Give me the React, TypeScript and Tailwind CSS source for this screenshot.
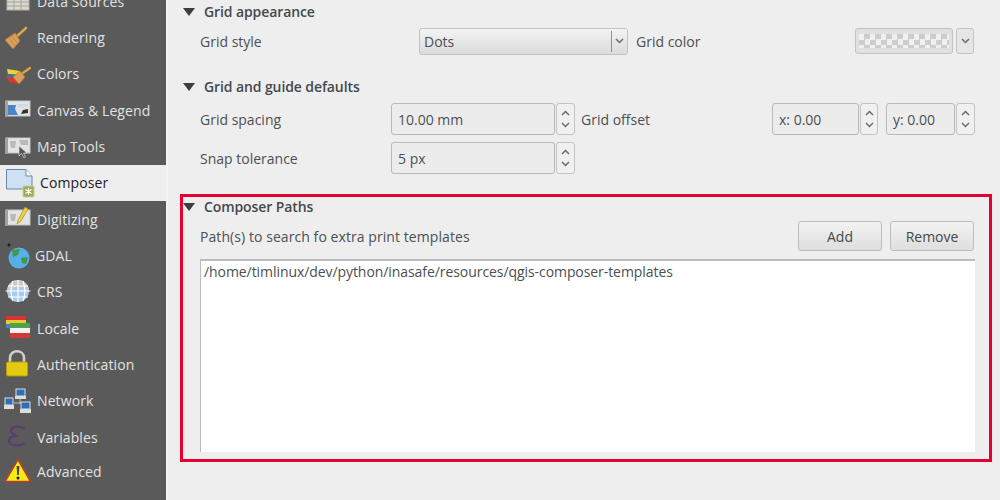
import * as React from 'react';

const MapBase = ({ children }: { children?: React.ReactNode }) => (
  <>
    <rect x="5" y="6" width="24" height="15" fill="#e4e4e4" stroke="#c8c8c8" />
    <path d="M4 6 L7 5 V21 L4 22 Z" fill="#a2a2a2" />
    {children}
  </>
);

const icons: Record<string, React.ReactNode> = {
  'Data Sources': (
    <>
      <rect x="6" y="6" width="22" height="18" fill="#dad7cd" stroke="#b5b1a8" />
      <path d="M6 12 H28 M6 16 H28 M6 20 H28 M13 6 V24 M20 6 V24" stroke="#a9a59b" />
    </>
  ),
  Rendering: (
    <>
      <path d="M14 15 L25 5" stroke="#d9a441" strokeWidth="2.6" strokeLinecap="round" />
      <path d="M4 17 L14 10 L19 18 L12 26 Z" fill="#d9a05a" stroke="#b47a34" strokeWidth="0.8" />
      <path d="M8 15 L14 23 M11 13 L16 20" stroke="#bd8540" strokeWidth="0.8" />
    </>
  ),
  Colors: (
    <>
      <path d="M6 10 L19 12 L20 16 L7 15 Z" fill="#e8d33a" />
      <path d="M6 15 L16 16 L15 19 L6 18 Z" fill="#3f6ea8" />
      <path d="M5 18 L14 19 L19 25 L8 23 Z" fill="#d8382e" />
      <path d="M19 16 L29 9" stroke="#d9a441" strokeWidth="2.4" strokeLinecap="round" />
      <path d="M12 18 L19 12 L24 18 L18 25 Z" fill="#d9a05a" stroke="#b47a34" strokeWidth="0.8" />
    </>
  ),
  'Canvas & Legend': (
    <MapBase>
      <path d="M7 10 H15 L14 14 L17 20 H7 Z" fill="#4a86c5" />
      <path d="M16 9 H27 V11 L22 13 L17 12 Z" fill="#cfdcea" />
      <path d="M20 19 L22 15 L27 14 V18 Z" fill="#333" />
    </MapBase>
  ),
  'Map Tools': (
    <MapBase>
      <path d="M9 9 H15 L14 16 H10 Z M18 8 H27 V13 H20 Z" fill="#b9b9b9" />
      <path d="M18 14 V24 L20.5 21.5 L23 26 L24.5 25 L22.5 21 L26 21 Z" fill="#555" stroke="#d8d8d8" strokeWidth="0.7" />
    </MapBase>
  ),
  Composer: (
    <>
      <path d="M5.5 1.5 H25 L31 8 V21 H5.5 Z" fill="#cfe0f5" stroke="#6a87a8" />
      <path d="M25 1.5 V8 H31" fill="#fff" stroke="#6a87a8" />
      <rect x="22" y="18" width="11" height="11" rx="1" fill="#a3ab54" stroke="#c9cd93" />
      <path d="M27.5 20 V27 M24.5 21.5 L30.5 25.5 M30.5 21.5 L24.5 25.5" stroke="#fff" strokeWidth="1.2" />
    </>
  ),
  Digitizing: (
    <MapBase>
      <path d="M9 10 H15 L14 17 H10 Z" fill="#b9b9b9" />
      <path d="M17 16 L24 3 L27 5 L20 17 L16 20 Z" fill="#ecd13a" stroke="#a88f1c" strokeWidth="0.7" />
    </MapBase>
  ),
  GDAL: (
    <>
      <circle cx="8" cy="4" r="1.5" fill="#2a1c1c" />
      <circle cx="18" cy="17" r="10.5" fill="#58aee6" />
      <path d="M11 9 L19 8 L17 14 L12 16 Z M20 17 L27 16 L25 23 L21 22 Z" fill="#3e9a48" />
    </>
  ),
  CRS: (
    <>
      <circle cx="17" cy="14" r="11" fill="#a9cbef" />
      <path d="M6 14 A11 11 0 0 1 28 14 L17 10 Z" fill="#c9c9c9" />
      <path d="M7 9 H27 M4.5 14 H29.5 M7 20 H27 M17 3 V25 M12 4 Q8 14 12 24 M22 4 Q26 14 22 24" stroke="#fff" strokeWidth="1.2" fill="none" />
    </>
  ),
  Locale: (
    <>
      <path d="M5 3 H25 V7 H5 Z" fill="#d9352c" />
      <path d="M5 7 H25 V11 H5 Z" fill="#ecc92e" />
      <path d="M5 11 H12 V15 H5 Z" fill="#4a7fc1" />
      <path d="M9 10 H29 V15 H9 Z" fill="#4ea24c" />
      <path d="M9 15 H29 V20 H9 Z" fill="#f2f2f2" />
      <path d="M9 20 H29 V25 H9 Z" fill="#d23b33" />
    </>
  ),
  Authentication: (
    <>
      <path d="M9 13 V8 C9 -1 23 -1 23 8 V13" fill="none" stroke="#cfcfcf" strokeWidth="2.6" />
      <rect x="5.5" y="12" width="21" height="14" rx="1.5" fill="#e6c911" stroke="#b39c0c" />
    </>
  ),
  Network: (
    <>
      <path d="M19 12 V18 M13 17 H20" stroke="#bbb" />
      <rect x="15" y="3" width="9" height="7" fill="#2f6fb5" stroke="#ddd" />
      <rect x="14" y="10" width="11" height="3" fill="#dcdcdc" />
      <rect x="4" y="12" width="8" height="7" fill="#2f6fb5" stroke="#ddd" />
      <rect x="3" y="19" width="10" height="4" fill="#dcdcdc" />
      <rect x="20" y="16" width="9" height="7" fill="#2f6fb5" stroke="#ddd" />
      <rect x="19" y="23" width="11" height="4" fill="#dcdcdc" />
    </>
  ),
  Variables: (
    <path d="M24 7 C19 3 10 4 10 9 C10 12 13 13 17 14 C12 14 8 15 8 19 C8 24 19 25 24 21" fill="none" stroke="#5b3b77" strokeWidth="2.2" />
  ),
  Advanced: (
    <>
      <path d="M17 2.5 L29.5 24.5 H4 Z" fill="#f5ea1b" stroke="#b8402a" strokeWidth="1.6" strokeLinejoin="round" />
      <path d="M15.6 9 H18.4 L17.8 18 H16.2 Z" fill="#444" />
      <circle cx="17" cy="21" r="1.5" fill="#222" />
    </>
  ),
};

const items = [
  'Data Sources', 'Rendering', 'Colors', 'Canvas & Legend', 'Map Tools', 'Composer', 'Digitizing',
  'GDAL', 'CRS', 'Locale', 'Authentication', 'Network', 'Variables', 'Advanced',
];

const SideItem = ({ label }: { label: string }) => {
  const active = label === 'Composer';
  return (
    <div
      className={`flex items-center h-[36.35px] shrink-0 pl-[1px] tracking-[0.1px] ${label === 'Advanced' ? '-mt-[2px]' : ''} ${active ? 'bg-[#eeeeee] text-[#1c1c1c]' : 'text-[#e2e2e2]'}`}
    >
      <svg width="36" height="30" viewBox="0 0 36 30" className="shrink-0 overflow-visible">
        {icons[label]}
      </svg>
      <span className={active ? 'ml-[3px]' : label === 'GDAL' ? '-ml-[2px]' : ''}>{label}</span>
    </div>
  );
};

const Heading = ({ children }: { children: React.ReactNode }) => (
  <div className="flex items-center h-[19px] font-semibold text-[#45494a] tracking-[-0.1px]">
    <svg width="12" height="8" viewBox="0 0 12 8" className="mr-[9px]">
      <path d="M0 0 H12 L6 8 Z" fill="#3c3f40" />
    </svg>
    {children}
  </div>
);

const Chevron = ({ up }: { up?: boolean }) => (
  <svg width="9" height="6" viewBox="0 0 9 6">
    <path d={up ? 'M1 5 L4.5 1.5 L8 5' : 'M1 1 L4.5 4.5 L8 1'} fill="none" stroke="#6b6b6b" strokeWidth="1.5" />
  </svg>
);

const Spin = ({ value, width, btn }: { value: string; width: string; btn: string }) => (
  <div className="flex h-[32px] shrink-0">
    <div className={`${width} flex items-center pl-[6px] bg-[#ececec] border border-[#b9b9b9] rounded-[3px]`}>{value}</div>
    <div className={`${btn} flex flex-col items-center justify-around py-[3px] bg-[#f0f0f0] border border-[#c4c4c4] rounded-[3px] ml-[1px]`}>
      <Chevron up />
      <Chevron />
    </div>
  </div>
);

const PushButton = ({ children }: { children: React.ReactNode }) => (
  <button className="w-[84px] h-[30px] rounded-[3px] border border-[#bdbdbd] bg-gradient-to-b from-[#f2f2f2] to-[#dedede] text-[#45494a]">
    {children}
  </button>
);

export default function App() {
  return (
    <div className="flex w-[1000px] h-[500px] overflow-hidden bg-[#eeeeee] text-[14px] text-[#4c5051] font-['Open_Sans',sans-serif]">
      <aside className="w-[166px] shrink-0 bg-[#5a5a5a] flex flex-col -mt-[17px] h-[517px]">
        {items.map((i) => (
          <SideItem key={i} label={i} />
        ))}
      </aside>

      <main className="flex-1 pl-[15px] pt-[2px] border-l-2 border-[#f3f3f3]">
        <Heading>Grid appearance</Heading>
        <div className="flex items-center ml-[17px] mt-[6px] h-[28px]">
          <span className="w-[219px]">Grid style</span>
          <div className="flex w-[209px] h-[27px] items-center border border-[#c2c2c2] rounded-[3px] bg-gradient-to-b from-[#f3f3f3] to-[#dcdcdc] pl-[4px]">
            <span className="flex-1">Dots</span>
            <div className="w-[16px] h-[21px] border-l border-[#8f8f8f] flex items-center justify-center">
              <Chevron />
            </div>
          </div>
          <span className="ml-[8px] flex-1">Grid color</span>
          <div className="w-[98px] h-[26px] px-[3px] py-[5px] border border-[#c2c2c2] rounded-[3px] bg-[#e0e0e0] -mt-[1px]">
            <div className="w-full h-full bg-[repeating-conic-gradient(#cdcdcd_0_25%,#f0f0f0_0_50%)] bg-[length:11px_11px]" />
          </div>
          <div className="ml-[3px] mr-[26px] w-[18px] h-[26px] -mt-[1px] border border-[#c2c2c2] rounded-[3px] bg-[#e6e6e6] flex items-center justify-center">
            <Chevron />
          </div>
        </div>

        <div className="mt-[22px]">
          <Heading>Grid and guide defaults</Heading>
        </div>
        <div className="flex items-center ml-[17px] mt-[7px]">
          <span className="w-[191px]">Grid spacing</span>
          <Spin value="10.00 mm" width="w-[164px]" btn="w-[19px]" />
          <span className="ml-[6px] flex-1">Grid offset</span>
          <Spin value="x: 0.00" width="w-[87px]" btn="w-[18px]" />
          <div className="w-[8px]" />
          <Spin value="y: 0.00" width="w-[69px]" btn="w-[19px]" />
          <div className="w-[25px]" />
        </div>
        <div className="flex items-center ml-[17px] mt-[7px]">
          <span className="w-[191px]">Snap tolerance</span>
          <Spin value="5 px" width="w-[164px]" btn="w-[19px]" />
        </div>

        <section className="mt-[20px] -ml-[3px] mr-[8px] h-[268px] border-[3px] border-[#e4012f] pr-[15px] flex flex-col">
          <Heading>Composer Paths</Heading>
          <div className="flex items-center ml-[17px] mt-[5px] h-[30px]">
            <span className="flex-1 tracking-[0.07px]">Path(s) to search fo extra print templates</span>
            <PushButton>Add</PushButton>
            <div className="w-[8px]" />
            <PushButton>Remove</PushButton>
          </div>
          <div className="ml-[17px] mt-[8px] mb-[7px] -mr-[1px] flex-1 bg-white border-t-2 border-l border-[#bcbcbc] px-[3px] tracking-[-0.07px]">
            /home/timlinux/dev/python/inasafe/resources/qgis-composer-templates
          </div>
        </section>
      </main>
    </div>
  );
}
